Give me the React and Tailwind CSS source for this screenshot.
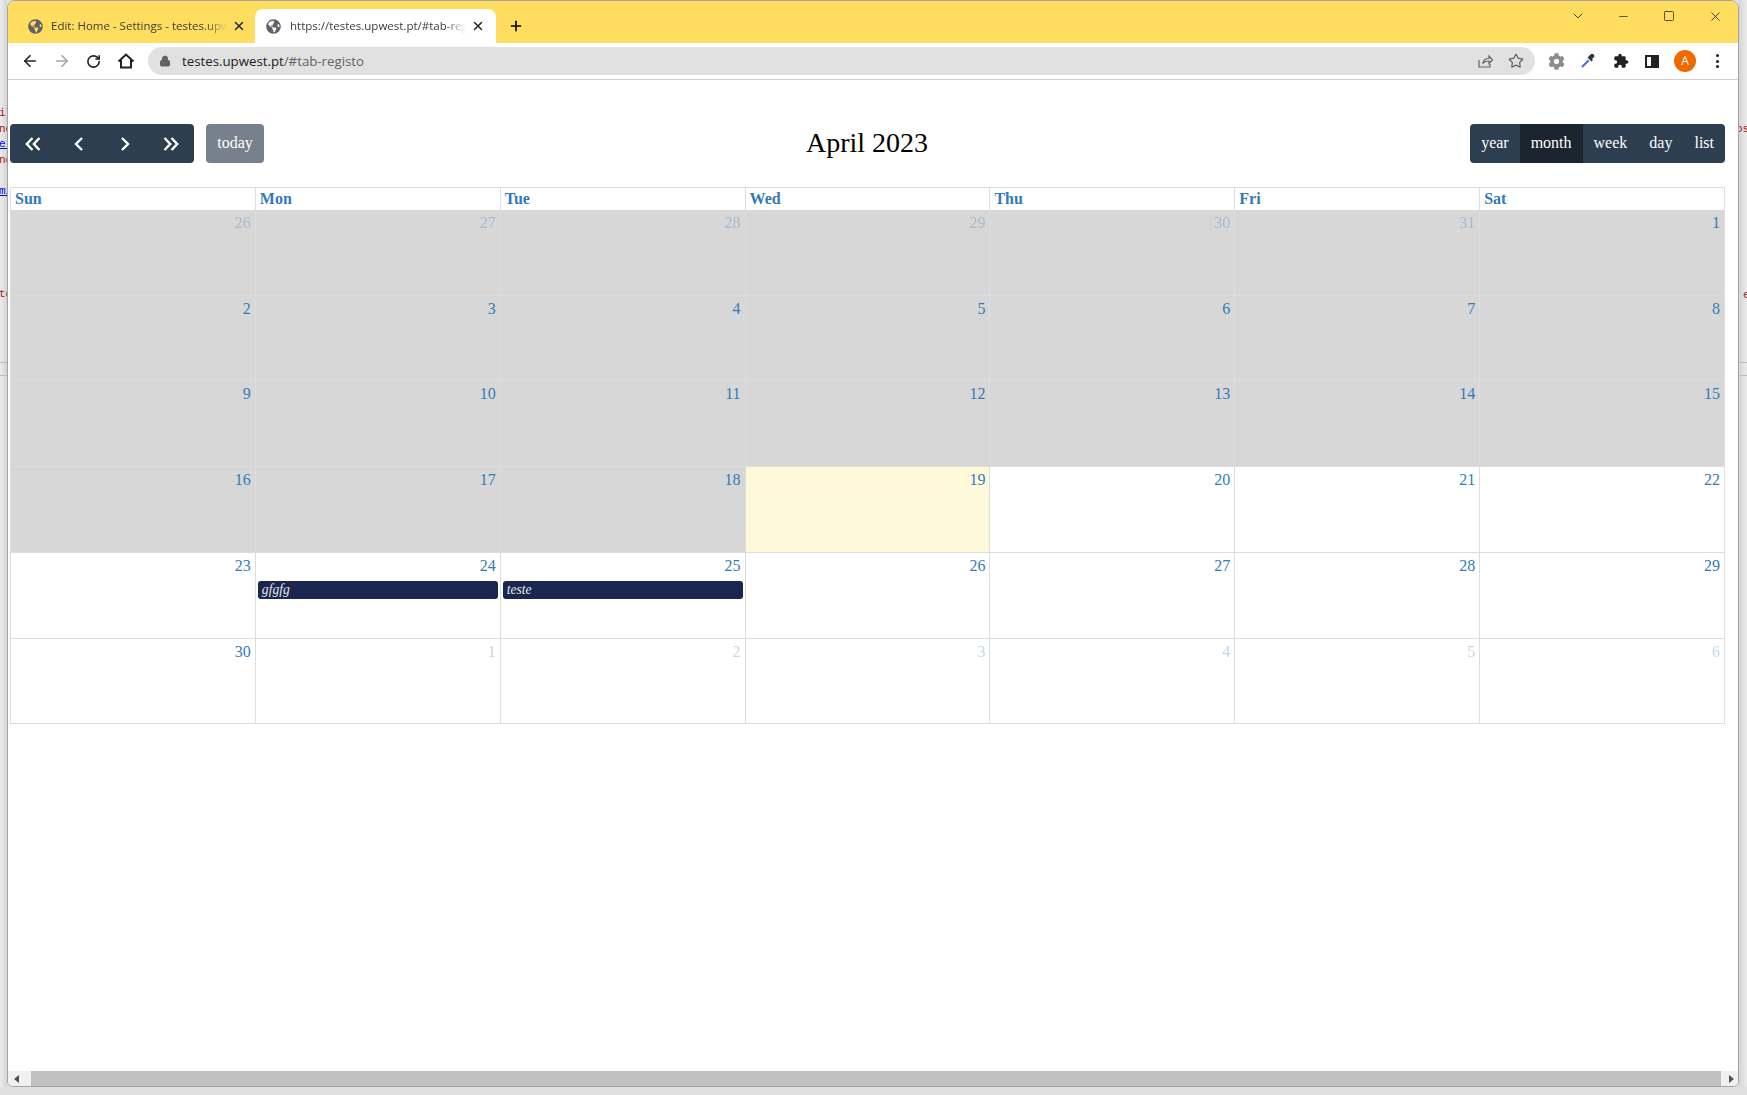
import { ArrowLeft, ArrowRight, RotateCw, Lock, Star, Plus, X, Minus, Square, ChevronDown } from 'lucide-react';
import { FaGlobeAmericas, FaCog } from 'react-icons/fa';

const serif = "font-['Liberation_Serif','Times_New_Roman',serif]";
const ui = "font-['Open_Sans','Noto_Sans',sans-serif]";

const days = [
    { n: 26, other: true, past: true }, { n: 27, other: true, past: true }, { n: 28, other: true, past: true }, { n: 29, other: true, past: true }, { n: 30, other: true, past: true }, { n: 31, other: true, past: true }, { n: 1, past: true },
    { n: 2, past: true }, { n: 3, past: true }, { n: 4, past: true }, { n: 5, past: true }, { n: 6, past: true }, { n: 7, past: true }, { n: 8, past: true },
    { n: 9, past: true }, { n: 10, past: true }, { n: 11, past: true }, { n: 12, past: true }, { n: 13, past: true }, { n: 14, past: true }, { n: 15, past: true },
    { n: 16, past: true }, { n: 17, past: true }, { n: 18, past: true }, { n: 19, today: true }, { n: 20 }, { n: 21 }, { n: 22 },
    { n: 23 }, { n: 24, event: 'gfgfg' }, { n: 25, event: 'teste' }, { n: 26 }, { n: 27 }, { n: 28 }, { n: 29 },
    { n: 30 }, { n: 1, other: true }, { n: 2, other: true }, { n: 3, other: true }, { n: 4, other: true }, { n: 5, other: true }, { n: 6, other: true },
];

const DoubleChevron = ({ flip }) => (
    <svg width="16" height="14" viewBox="0 0 16 14" fill="none" stroke="#fff" strokeWidth="2.4" className={flip ? 'rotate-180' : ''}>
        <path d="M7.500 1 1.800 7l5.700 6M14.500 1 8.800 7l5.700 6" />
    </svg>
);

const SingleChevron = ({ flip }) => (
    <svg width="10" height="14" viewBox="0 0 10 14" fill="none" stroke="#fff" strokeWidth="2.4" className={flip ? 'rotate-180' : ''}>
        <path d="M8 1 2 7l6 6" />
    </svg>
);

const Tab = ({ title, active }) => (
    <div className={`flex items-center h-[34px] w-[241px] rounded-t-lg ${active ? 'bg-white pl-[11px]' : 'pl-[14px]'}`}>
        <FaGlobeAmericas className="w-[15px] h-[15px] text-[#5f6368] shrink-0" />
        <span className={`${ui} ${active ? 'ml-[9px]' : 'ml-[8px]'} w-[176px] overflow-hidden whitespace-nowrap text-[11.5px] text-[#3c3c3c] [mask-image:linear-gradient(to_right,black_88%,transparent)]`}>{title}</span>
        <X className="ml-[5px] w-[14px] h-[14px] text-[#2b2b2b] shrink-0" strokeWidth={2.6} />
    </div>
);

// restos de texto da janela de trás
const LeftGutter = () => (
    <div className="w-[7px] h-full overflow-hidden bg-gradient-to-r from-[#ececec] to-[#d4d4d4] font-['Liberation_Mono',monospace] text-[11px] pt-[106px]">
        <div className="h-[15.5px] -ml-[1px] whitespace-nowrap leading-[15.5px] text-[#a31515]">il</div>
        <div className="h-[15.5px] -ml-[1px] whitespace-nowrap leading-[15.5px] text-[#a31515]">ne</div>
        <div className="h-[15.5px] -ml-[1px] whitespace-nowrap leading-[15.5px] text-[#0000ee] underline">el</div>
        <div className="h-[15.5px] -ml-[1px] whitespace-nowrap leading-[15.5px] text-[#a31515]">nd</div>
        <div className="h-[15.5px] -ml-[1px] mt-[15.5px] whitespace-nowrap leading-[15.5px] text-[#0000ee] underline">mi</div>
        <div className="h-[15.5px] -ml-[1px] mt-[88px] whitespace-nowrap leading-[15.5px] text-[#a31515]">to</div>
        <div className="h-px mt-[59px] bg-[#bdbdbd]" />
        <div className="h-px mt-[12px] bg-[#bdbdbd]" />
    </div>
);

const RightGutter = () => (
    <div className="flex-1 h-full overflow-hidden bg-gradient-to-l from-[#ececec] to-[#d4d4d4] font-['Liberation_Mono',monospace] text-[11px] pt-[122px]">
        <div className="h-[15.5px] -ml-[3px] whitespace-nowrap leading-[15.5px] text-[#a31515]">os</div>
        <div className="h-[15.5px] mt-[150px] pl-[4px] leading-[15.5px] text-[#a31515]">e</div>
        <div className="h-px mt-[59px] bg-[#bdbdbd]" />
        <div className="h-px mt-[12px] bg-[#bdbdbd]" />
    </div>
);

const App = () => {
    const viewBtn = 'px-[11px] pb-[2px] h-full flex items-center';

    return (
        <div className="w-[1747px] h-[1095px] overflow-hidden bg-[#e0e0e0]">
            <div className="flex h-[1087px]">
                <LeftGutter />

                {/* janela do browser */}
                <div className="w-[1732px] h-full flex flex-col overflow-hidden bg-white border border-[#a3a3a3] rounded-t-lg rounded-b-md">
                    <div className="flex items-end h-[42px] bg-[#ffdd5e] pl-[6px] shrink-0">
                        <Tab title="Edit: Home - Settings - testes.upwest.pt" />
                        <Tab title="https://testes.upwest.pt/#tab-registo" active />
                        <Plus className="ml-[12px] mb-[9px] w-[16px] h-[16px] text-black" strokeWidth={2.4} />
                        <div className="ml-auto flex items-center h-[30px] self-start text-[#1f1f1f]">
                            <ChevronDown className="w-[16px] h-[16px] mr-[31px]" strokeWidth={1.3} />
                            <Minus className="w-[13px] h-[13px] mr-[33px]" strokeWidth={1.3} />
                            <Square className="w-[12px] h-[12px] mr-[33px]" strokeWidth={1.5} />
                            <X className="w-[15px] h-[15px] mr-[15px]" strokeWidth={1.3} />
                        </div>
                    </div>

                    {/* barra de endereço */}
                    <div className="flex items-center h-[37px] shrink-0 border-b border-[#cfcfcf] bg-white">
                        <ArrowLeft className="ml-[13px] w-[18px] h-[18px] text-[#222]" strokeWidth={2.2} />
                        <ArrowRight className="ml-[14px] w-[18px] h-[18px] text-[#a5a5a5]" strokeWidth={2.2} />
                        <RotateCw className="ml-[15px] w-[15px] h-[15px] text-[#222]" strokeWidth={2.6} />
                        <svg width="18" height="18" viewBox="0 0 18 18" fill="none" stroke="#222" strokeWidth="2" className="ml-[16px]">
                            <path d="M1.500 9.500 9 2.500l7.500 7M4 8v7.500h10V8" />
                        </svg>
                        <div className="ml-[13px] flex items-center w-[1387px] h-[28px] rounded-full bg-[#e1e1e1]">
                            <Lock className="ml-[11px] w-[12px] h-[12px] text-[#5f6368] fill-[#5f6368]" />
                            <span className={`${ui} ml-[11px] mt-[1px] text-[13.25px] text-[#202124]`}>testes.upwest.pt<span className="text-[#5f6368]">/#tab-registo</span></span>
                            <svg width="16" height="16" viewBox="0 0 16 16" fill="none" stroke="#5f6368" strokeWidth="1.2" className="ml-auto mr-[15px]">
                                <path d="M2 7v7h11v-3M6 10c.5-3 3-4.500 6-4.500V3l3.500 3.800L12 10.500V8c-2.500 0-4.500.5-6 2Z" />
                            </svg>
                            <Star className="mr-[11px] w-[16px] h-[16px] text-[#5f6368]" strokeWidth={1.8} />
                        </div>
                        <FaCog className="ml-[13px] w-[17px] h-[17px] text-[#8c8c8c]" />
                        <svg width="16" height="16" viewBox="0 0 16 16" className="ml-[15px]">
                            <path d="M2 14.500 1.500 13 8 6.500l1.500 1.500L3 14.500Z" fill="#4a6fd6" />
                            <path d="M7.500 4.500 9 3l1.500-1.500c1-1 2.300-1 3.200-.1s.9 2.200-.1 3.200L12 6l1 1-1.500 1.500-4-4Z" fill="#333" />
                        </svg>
                        <svg width="16" height="16" viewBox="0 0 24 24" fill="#222" className="ml-[17px]">
                            <path d="M20.500 11H19V7c0-1.100-.9-2-2-2h-4V3.500C13 2.120 11.880 1 10.500 1S8 2.120 8 3.500V5H4c-1.100 0-1.990.9-1.990 2v3.800H3.500c1.490 0 2.700 1.210 2.700 2.700s-1.210 2.700-2.700 2.700H2V20c0 1.100.9 2 2 2h3.800v-1.500c0-1.490 1.210-2.700 2.700-2.700s2.700 1.210 2.700 2.700V22H17c1.100 0 2-.9 2-2v-4h1.500c1.380 0 2.500-1.120 2.500-2.500S21.880 11 20.500 11Z" />
                        </svg>
                        <div className="ml-[16px] flex justify-end w-[14px] h-[13px] border-2 border-[#222]">
                            <div className="w-[6px] h-full bg-[#222]" />
                        </div>
                        <div className={`${ui} ml-[15px] flex items-center justify-center w-[22px] h-[22px] rounded-full bg-[#ee6a00] text-white text-[12px]`}>A</div>
                        <div className="ml-[20px] flex flex-col gap-[2.5px]">
                            <div className="w-[3px] h-[3px] rounded-full bg-[#222]" />
                            <div className="w-[3px] h-[3px] rounded-full bg-[#222]" />
                            <div className="w-[3px] h-[3px] rounded-full bg-[#222]" />
                        </div>
                    </div>

                    {/* calendario */}
                    <div className={`${serif} flex-1 pt-[44px] pl-[2px] pr-[13px] text-[16px]`}>
                        <div className="flex items-center justify-between h-[39px] mb-[24px]">
                            <div className="flex gap-[12px] h-full">
                                <div className="flex h-full w-[184px] rounded bg-[#2c3e50]">
                                    <div className="flex-1 flex items-center justify-center"><DoubleChevron /></div>
                                    <div className="flex-1 flex items-center justify-center"><SingleChevron /></div>
                                    <div className="flex-1 flex items-center justify-center"><SingleChevron flip /></div>
                                    <div className="flex-1 flex items-center justify-center"><DoubleChevron flip /></div>
                                </div>
                                <div className="flex items-center justify-center w-[58px] h-full pb-[2px] rounded bg-[#2c3e50]/65 text-white">today</div>
                            </div>
                            <div className="pb-[2px] text-[28px] text-black">April 2023</div>
                            <div className="flex h-full rounded overflow-hidden bg-[#2c3e50] text-white">
                                <div className={viewBtn}>year</div>
                                <div className={`${viewBtn} bg-[#1a252f]`}>month</div>
                                <div className={viewBtn}>week</div>
                                <div className={viewBtn}>day</div>
                                <div className={viewBtn}>list</div>
                            </div>
                        </div>

                        <div className="border-l border-t border-[#dddddd]">
                            <div className="grid grid-cols-7 h-[22px]">
                                {['Sun', 'Mon', 'Tue', 'Wed', 'Thu', 'Fri', 'Sat'].map(d => (
                                    <div key={d} className="border-r border-[#dddddd] px-[4px] font-bold text-[#337ab7] leading-[22px]">{d}</div>
                                ))}
                            </div>
                            <div className="grid grid-cols-7 grid-rows-[86px_85px_86px_86px_86px_85px]">
                                {days.map((d, i) => (
                                    <div key={i} className={`min-w-0 border-r border-b border-[#dddddd] ${d.past ? 'bg-[#d7d7d7]' : ''} ${d.today ? 'bg-[#fff9db]' : ''}`}>
                                        <div className={`text-right pr-[4px] pt-[1px] leading-[24px] text-[#337ab7] ${d.other ? 'opacity-30' : ''}`}>{d.n}</div>
                                        {d.event && (
                                            <div className="mx-[2px] mt-[3px] h-[18px] px-[4px] rounded-[3px] bg-[#1a2550] text-[#e8e8e8] italic text-[13.6px] leading-[17px]">{d.event}</div>
                                        )}
                                    </div>
                                ))}
                            </div>
                        </div>
                    </div>

                    {/* scroll horizontal */}
                    <div className="flex items-center h-[15px] shrink-0 bg-[#f1f1f1]">
                        <div className="ml-[6px] w-0 h-0 border-y-[4px] border-y-transparent border-r-[5px] border-r-[#505050]" />
                        <div className="ml-[12px] w-[1690px] h-full bg-[#c1c1c1]" />
                        <div className="ml-[8px] w-0 h-0 border-y-[4px] border-y-transparent border-l-[5px] border-l-[#505050]" />
                    </div>
                </div>

                <RightGutter />
            </div>
        </div>
    );
};

export default App;
